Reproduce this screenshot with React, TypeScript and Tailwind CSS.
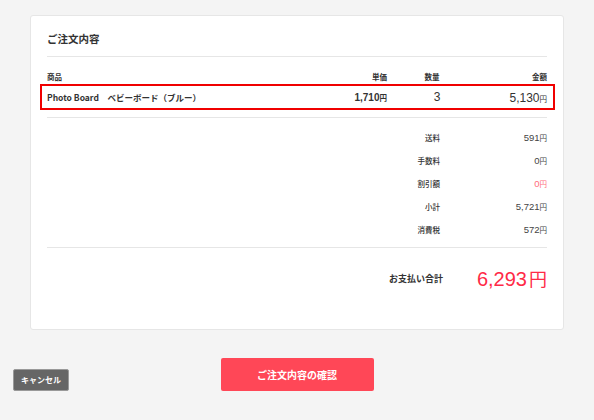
import React from "react";

const JP = { fontFamily: '"Noto Sans CJK JP", "Noto Sans", sans-serif' };
const NUM = { fontFamily: '"Liberation Sans", Arial, "Noto Sans CJK JP", sans-serif' };

function Yen({ v, cls = "" }: { v: string; cls?: string }) {
  return (
    <span className={cls}>
      <span style={NUM}>{v}</span>
      <span className="text-[7.5px]" style={JP}>円</span>
    </span>
  );
}

const rows: { label: string; value: string; red?: boolean }[] = [
  { label: "送料", value: "591" },
  { label: "手数料", value: "0" },
  { label: "割引額", value: "0", red: true },
  { label: "小計", value: "5,721" },
  { label: "消費税", value: "572" },
];

export default function App() {
  return (
    <div className="w-[594px] h-[420px] bg-[#f4f4f4] overflow-hidden text-[#333]" style={JP}>
      <div className="pt-[15px] px-[30px]">
        <div className="bg-white border border-[#e6e6e6] rounded-[3px] px-[16px] pt-[15px] pb-[33px]">
          <div className="text-[10.5px] font-bold leading-[16px] h-[16px]">ご注文内容</div>
          <div className="mt-[9px] h-px bg-[#e6e6e6]" />
          <div className="mt-[14px] flex items-center h-[12px] text-[7.5px] font-bold">
            <div className="flex-1">商品</div>
            <div className="w-[60px] text-right">単価</div>
            <div className="w-[90px] text-center">数量</div>
            <div className="w-[70px] text-right">金額</div>
          </div>
          <div className="mt-[1px] -ml-[7px] -mr-[8px] pl-[5px] pr-[6px] h-[26px] border-2 border-[#f00000] flex items-center">
            <div className="flex-1 text-[8.5px] font-bold">Photo Board　ベビーボード（ブルー）</div>
            <div className="w-[60px] text-right text-[10px] font-bold text-[#333]">
              <Yen v="1,710" />
            </div>
            <div className="w-[90px] text-center text-[12px] pl-[10px]" style={NUM}>3</div>
            <div className="w-[70px] text-right text-[12px]">
              <Yen v="5,130" />
            </div>
          </div>
          <div className="mt-[7px] h-px bg-[#e6e6e6]" />
          <div className="pt-[8px]">
            {rows.map((r) => (
              <div key={r.label} className="h-[23px] flex items-center justify-end">
                <div className="text-[7.5px] text-[#333] font-medium text-right">{r.label}</div>
                <div className={`w-[107px] text-right text-[9.5px] ${r.red ? "text-[#ff6b7b]" : "text-[#444]"}`}>
                  <Yen v={r.value} />
                </div>
              </div>
            ))}
          </div>
          <div className="mt-[6px] h-px bg-[#e6e6e6]" />
          <div className="mt-[14px] h-[34px] flex items-center justify-end">
            <div className="text-[9px] font-bold text-[#333]">お支払い合計</div>
            <div className="w-[104px] text-right text-[#ff2a47] leading-none">
              <span className="text-[20px]" style={NUM}>6,293</span>
              <span className="text-[18px] ml-[2px]" style={JP}>円</span>
            </div>
          </div>
        </div>
      </div>
      <div className="mt-[28px] px-[13px] grid grid-cols-[1fr_auto_1fr] items-end">
        <div>
          <button className="w-[56px] h-[22px] bg-[#666] border border-[#999] rounded-[2px] text-white text-[8px] font-bold flex items-center justify-center" style={JP}>
            キャンセル
          </button>
        </div>
        <button className="w-[153px] h-[33px] bg-[#ff4757] rounded-[2px] text-white text-[10px] font-bold flex items-center justify-center" style={JP}>
          ご注文内容の確認
        </button>
        <div />
      </div>
    </div>
  );
}
